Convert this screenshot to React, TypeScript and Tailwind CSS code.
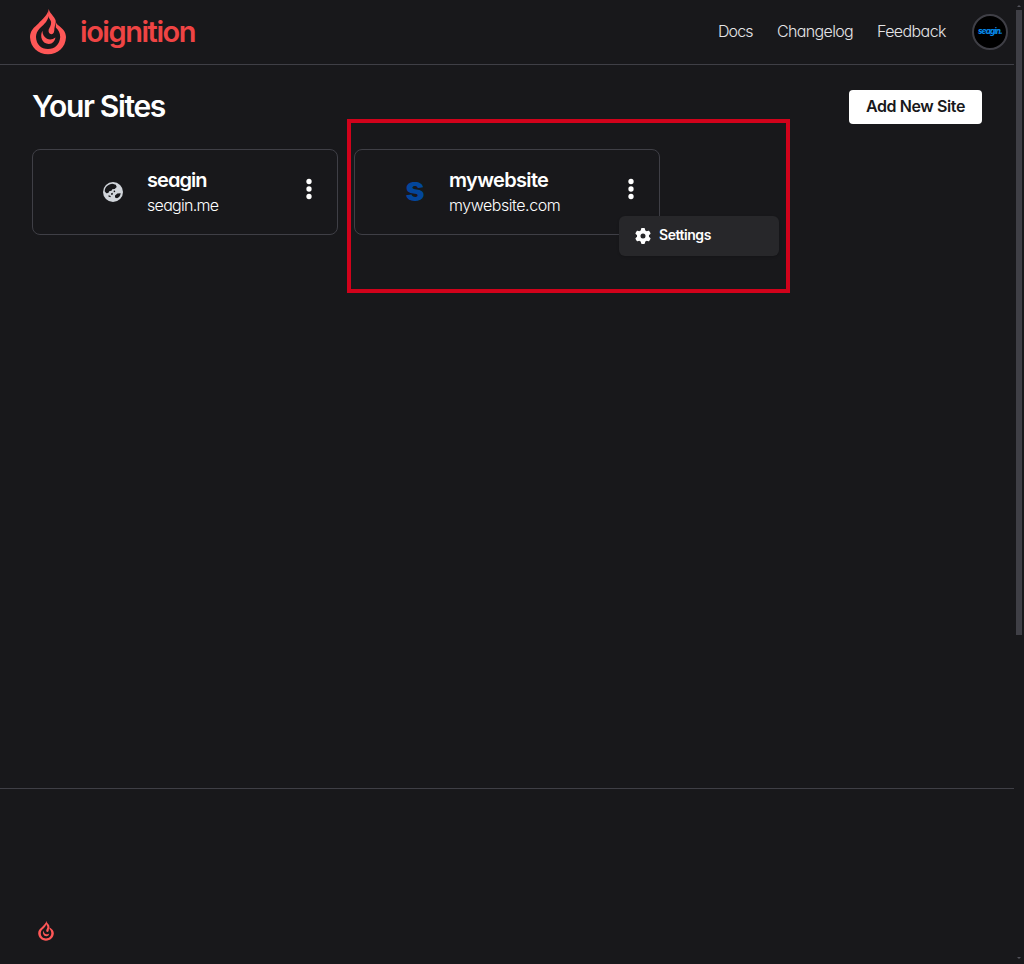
import React from "react";
import { FaGear } from "react-icons/fa6";

function Flame({ className }: { className: string }) {
  return (
    <svg viewBox="0 0 36 46" className={className} fill="#ff5757">
      <path d="M18.8 0C18 5.5 12.5 10.3 8.4 14.4C4 18.4 0 21.5 0 28.3C.5 38.3 8 45.3 18 45.3C28 45.3 35.6 38.3 36 28.3C36 22.4 31.8 19 28.2 16.3C27 15.4 26.3 14.5 25.9 13L25.8 18.5C28.6 21 30.2 24 30.2 28C29.7 35.3 25 40 18 40C11 40 6.2 35.3 6 28C6 24.5 7.2 22 9.6 19.4C13 16.3 17.4 12.8 18.3 8Z" />
      <path d="M18.8 0C19.4 4.2 24.2 7 25.6 11.2C26.4 14 24.6 16.5 24.4 19.5C24.5 23 23.4 25.3 21.4 25.2C19.2 25 18.1 23.1 18.7 20.6C19.5 18.3 21.4 16.2 21.1 13C20.8 10.6 18.6 9.5 17.9 6.5Z" />
      <path d="M12.4 21.8C9.4 27.6 12.2 35 18.8 35C22.6 34.9 25 32.3 25.4 28.6C22.8 30.6 19.8 31.2 17 29.8C14 28.3 12.4 25.4 12.4 21.8Z" />
    </svg>
  );
}

function Earth() {
  return (
    <svg viewBox="0 0 20 20" className="size-5">
      <circle cx="10" cy="10" r="10" fill="#d1d5db" />
      <g fill="#18181b">
        <path d="M9.5 1.7C5.2 2 1.9 5 1.7 9.2L3.2 11.2L5.3 11L6.2 9.2L8.5 8.8L9.3 7.2L11.7 7.1L13.7 5L12.8 2.7Z" />
        <path d="M12 13.6L14.3 11.4L17.7 11.3C17.4 13.8 16 15.6 14 16.3L12 15.6Z" />
        <path d="M8.1 11.2L9.7 10.8L9.9 12.4L8.3 12.9ZM5.6 13.2L7.8 14L7.4 15.2L5.4 14.5ZM10.6 8.7L12 8.5L12.2 9.9L10.8 10.2Z" />
      </g>
    </svg>
  );
}

function Dots() {
  return (
    <svg viewBox="0 0 24 24" className="size-6" fill="white">
      <circle cx="12" cy="4.5" r="2.65" />
      <circle cx="12" cy="12" r="2.65" />
      <circle cx="12" cy="19.5" r="2.65" />
    </svg>
  );
}

function SiteCard({ icon, name, domain, className, nameClass, domainClass, menu }: {
  icon: React.ReactNode;
  name: string;
  domain: string;
  className: string;
  nameClass: string;
  domainClass: string;
  menu?: React.ReactNode;
}) {
  return (
    <div className={"relative flex h-[86px] rounded-lg border border-[#3f3f46] " + className}>
      <div className="mt-[31px] flex size-[22px] items-center justify-center">{icon}</div>
      <div className="mt-4 ml-[23px] flex-1 whitespace-nowrap">
        <h2 className={"text-xl leading-7 font-semibold " + nameClass}>{name}</h2>
        <p className={"-mt-px text-base leading-6 font-light " + domainClass}>{domain}</p>
      </div>
      <button className="mt-[27px] mr-4 h-6"><Dots /></button>
      {menu}
    </div>
  );
}

export default function App() {
  return (
    <div className="flex h-[964px] w-[1024px] overflow-hidden bg-[#18181b] font-['Inter',sans-serif] text-white [font-feature-settings:'cv11']">
      <div className="flex w-[1014px] flex-col">
        <header className="flex h-[65px] shrink-0 items-center border-b border-[#3f3f46] pr-1.5 pl-[30px]">
          <Flame className="h-[46px] w-9" />
          <span className="ml-3.5 text-[29px] leading-9 font-semibold tracking-[-1.45px] text-[#ef4444]">ioignition</span>
          <nav className="-mt-0.5 ml-auto flex gap-6 text-base font-light text-zinc-200">
            <a className="w-[35px] tracking-[-0.9px]">Docs</a>
            <a className="w-[76px] tracking-[-0.65px]">Changelog</a>
            <a className="w-[69px] tracking-[-0.6px]">Feedback</a>
          </nav>
          <div className="ml-[26px] flex size-9 items-center justify-center rounded-full border-2 border-[#3f3f46] bg-black pb-0.5 text-[8px] font-extrabold tracking-[-0.8px] text-[#0788e8] italic">seagin.</div>
        </header>
        <main className="h-[723px] shrink-0 px-8 pt-[25px]">
          <div className="flex h-[34px] items-center justify-between">
            <h1 className="-mt-0.5 text-[30px] leading-9 font-semibold tracking-[-1.35px]">Your Sites</h1>
            <button className="h-[34px] w-[133px] rounded bg-white pb-0.5 text-base font-semibold tracking-[-0.4px] whitespace-nowrap text-[#18181b]">Add New Site</button>
          </div>
          <section className="relative mt-[25px] grid grid-cols-3 gap-4">
            <SiteCard
              icon={<Earth />}
              name="seagin"
              domain="seagin.me"
              className="pl-[69px]"
              nameClass="tracking-[-0.95px]"
              domainClass="tracking-[-0.7px]"
            />
            <SiteCard
              icon={<span className="-mt-1.5 text-[34px] leading-none font-extrabold text-[#03469b]">s</span>}
              name="mywebsite"
              domain="mywebsite.com"
              className="pl-[49px]"
              nameClass="tracking-[-0.65px]"
              domainClass="tracking-[-0.45px]"
              menu={
                <div className="absolute top-[66px] left-[264px] z-10 flex h-10 w-40 items-center gap-2 rounded-md bg-[#27272a] px-4 shadow-sm">
                  <FaGear className="size-4" />
                  <span className="-mt-0.5 text-sm font-semibold tracking-[-0.45px]">Settings</span>
                </div>
              }
            />
            <div className="pointer-events-none absolute -top-[30px] left-[315px] z-20 h-[174px] w-[443px] border-4 border-[#d0021b]" />
          </section>
        </main>
        <footer className="flex-1 border-t border-[#3f3f46] pt-[132px] pl-[38px]">
          <Flame className="h-5 w-4" />
        </footer>
      </div>
      <div className="flex w-2.5 flex-col items-center">
        <svg viewBox="0 0 6 3" className="mt-[5px] h-[2px] w-1 fill-[#52525b]"><path d="M3 0L6 3H0Z" /></svg>
        <div className="mt-[3px] h-[625px] w-1.5 bg-[#3f3f46]" />
        <svg viewBox="0 0 6 3" className="mt-auto mb-[5px] h-[2px] w-1 fill-[#52525b]"><path d="M0 0H6L3 3Z" /></svg>
      </div>
    </div>
  );
}
